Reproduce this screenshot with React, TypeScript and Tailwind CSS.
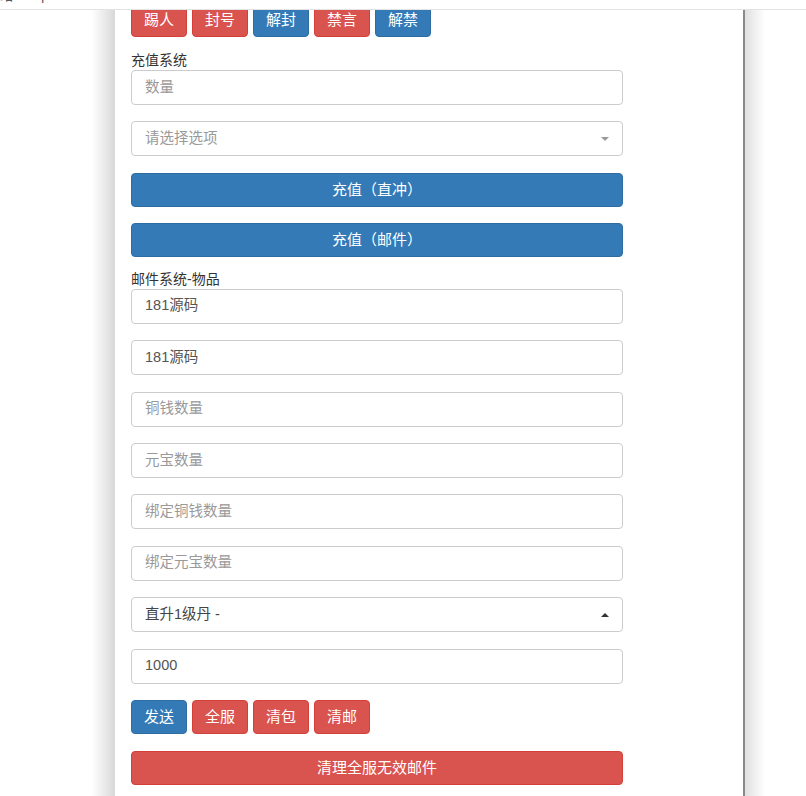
import React from "react";

const font = { fontFamily: '"Liberation Sans", "Noto Sans CJK SC", sans-serif' };

function Btn({ color, children }: { color: "red" | "blue"; children: React.ReactNode }) {
  return (
    <div
      className={
        "h-[34px] w-[56px] rounded-[4px] flex items-center justify-center text-white text-[15px] border " +
        (color === "red" ? "bg-[#d9534f] border-[#d43f3a]" : "bg-[#337ab7] border-[#2e6da4]")
      }
    >
      {children}
    </div>
  );
}

function Input({ value, placeholder, mb = true }: { value?: string; placeholder?: string; mb?: boolean }) {
  return (
    <div
      className={
        "h-[35px] w-[492px] rounded-[4px] border border-[#cccccc] bg-white flex items-center pl-[13px] text-[14.5px] " +
        (value ? "text-[#555555]" : "text-[#999999]") +
        (mb ? " mb-[16.4px]" : "")
      }
    >
      {value ?? placeholder}
    </div>
  );
}

function Select({ value, placeholder, up }: { value?: string; placeholder?: string; up?: boolean }) {
  return (
    <div
      className={
        "h-[35px] w-[492px] rounded-[4px] border border-[#cccccc] bg-white flex items-center justify-between pl-[13px] pr-[13px] text-[14.5px] mb-[16.4px] " +
        (value ? "text-[#444444]" : "text-[#999999]")
      }
    >
      <span>{value ?? placeholder}</span>
      {up ? (
        <svg width="8" height="4" viewBox="0 0 8 4">
          <path d="M0 4 L4 0 L8 4 Z" fill="#333" />
        </svg>
      ) : (
        <svg width="8" height="4" viewBox="0 0 8 4">
          <path d="M0 0 L8 0 L4 4 Z" fill="#999" />
        </svg>
      )}
    </div>
  );
}

function WideBtn({ color, children, mb }: { color: "red" | "blue"; children: React.ReactNode; mb?: string }) {
  return (
    <div
      className={
        "h-[34px] w-[492px] rounded-[4px] flex items-center justify-center text-white text-[15px] border " +
        (color === "red" ? "bg-[#d9534f] border-[#d43f3a]" : "bg-[#337ab7] border-[#2e6da4]") +
        " " +
        (mb ?? "")
      }
    >
      {children}
    </div>
  );
}

export default function App() {
  return (
    <div className="w-[806px] h-[796px] overflow-hidden bg-white relative" style={font}>
      <div className="h-[10px] border-b border-[#e3e3e3] overflow-hidden relative">
        <div className="absolute left-0 top-[-12px] text-[13px] text-[#555] leading-[16px]">站wordpress.</div>
      </div>
      <div className="flex h-[786px]">
        <div className="w-[115px] shrink-0 bg-gradient-to-r from-white from-[80%] to-[#d8d8d8]" />
        <div className="w-[628px] shrink-0 bg-white overflow-hidden pl-[16px]">
          <div className="flex gap-[5px] mt-[-7px]">
            <Btn color="red">踢人</Btn>
            <Btn color="red">封号</Btn>
            <Btn color="blue">解封</Btn>
            <Btn color="red">禁言</Btn>
            <Btn color="blue">解禁</Btn>
          </div>
          <div className="mt-[14px] h-[19px] leading-[19px] text-[14px] text-[#333]">充值系统</div>
          <Input placeholder="数量" />
          <Select placeholder="请选择选项" />
          <WideBtn color="blue" mb="mb-[16px]">充值（直冲）</WideBtn>
          <WideBtn color="blue">充值（邮件）</WideBtn>
          <div className="mt-[13px] h-[19px] leading-[19px] text-[14px] text-[#333]">邮件系统-物品</div>
          <Input value="181源码" />
          <Input value="181源码" />
          <Input placeholder="铜钱数量" />
          <Input placeholder="元宝数量" />
          <Input placeholder="绑定铜钱数量" />
          <Input placeholder="绑定元宝数量" />
          <Select value="直升1级丹 -" up />
          <Input value="1000" />
          <div className="flex gap-[5px]">
            <Btn color="blue">发送</Btn>
            <Btn color="red">全服</Btn>
            <Btn color="red">清包</Btn>
            <Btn color="red">清邮</Btn>
          </div>
          <div className="mt-[17px]">
            <WideBtn color="red">清理全服无效邮件</WideBtn>
          </div>
        </div>
        <div className="w-[2px] shrink-0 bg-[#8a8a8a]" />
        <div className="w-[20px] shrink-0 bg-gradient-to-r from-[#e0e0e0] to-white" />
        <div className="flex-1" />
      </div>
    </div>
  );
}
